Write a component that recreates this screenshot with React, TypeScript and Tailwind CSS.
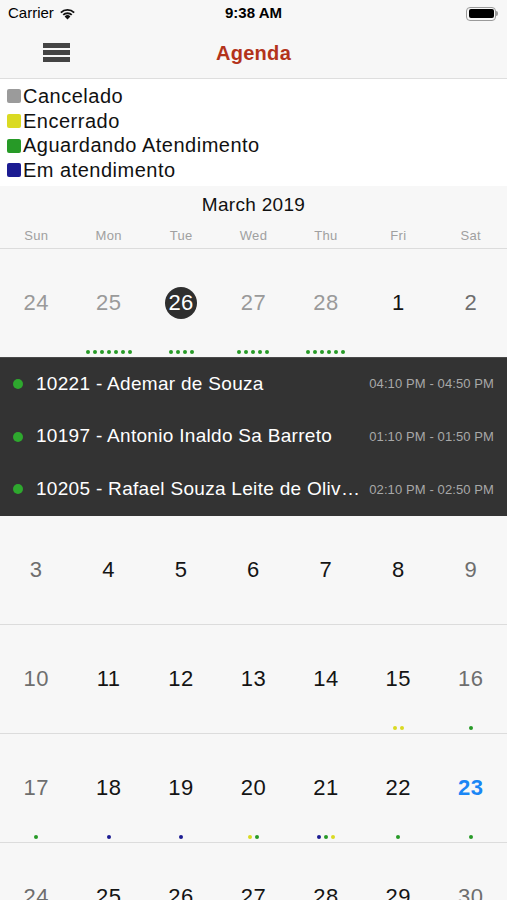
import React from "react";

type Day = { n: number; tone: "out" | "wk" | "we" | "sel" | "today"; dots?: string[] };

const G = "bg-[#279a27]";
const Y = "bg-[#dada22]";
const B = "bg-[#1c1c92]";

const rep = (c: string, k: number) => Array.from({ length: k }, () => c);

const weeks: Day[][] = [
  [
    { n: 24, tone: "out" },
    { n: 25, tone: "out", dots: rep(G, 7) },
    { n: 26, tone: "sel", dots: rep(G, 4) },
    { n: 27, tone: "out", dots: rep(G, 5) },
    { n: 28, tone: "out", dots: rep(G, 6) },
    { n: 1, tone: "wk" },
    { n: 2, tone: "we" },
  ],
  [
    { n: 3, tone: "we" },
    { n: 4, tone: "wk" },
    { n: 5, tone: "wk" },
    { n: 6, tone: "wk" },
    { n: 7, tone: "wk" },
    { n: 8, tone: "wk" },
    { n: 9, tone: "we" },
  ],
  [
    { n: 10, tone: "we" },
    { n: 11, tone: "wk" },
    { n: 12, tone: "wk" },
    { n: 13, tone: "wk" },
    { n: 14, tone: "wk" },
    { n: 15, tone: "wk", dots: [Y, Y] },
    { n: 16, tone: "we", dots: [G] },
  ],
  [
    { n: 17, tone: "we", dots: [G] },
    { n: 18, tone: "wk", dots: [B] },
    { n: 19, tone: "wk", dots: [B] },
    { n: 20, tone: "wk", dots: [Y, G] },
    { n: 21, tone: "wk", dots: [B, G, Y] },
    { n: 22, tone: "wk", dots: [G] },
    { n: 23, tone: "today", dots: [G] },
  ],
  [
    { n: 24, tone: "we" },
    { n: 25, tone: "wk" },
    { n: 26, tone: "wk" },
    { n: 27, tone: "wk" },
    { n: 28, tone: "wk" },
    { n: 29, tone: "wk" },
    { n: 30, tone: "we" },
  ],
];

const events = [
  { t: "10221 - Ademar de Souza", h: "04:10 PM - 04:50 PM" },
  { t: "10197 - Antonio Inaldo Sa Barreto", h: "01:10 PM - 01:50 PM" },
  { t: "10205 - Rafael Souza Leite de Oliveira", h: "02:10 PM - 02:50 PM" },
];

function Cell({ d }: { d: Day }) {
  const color =
    d.tone === "out"
      ? "text-[#9a9a9a]"
      : d.tone === "we"
      ? "text-[#6e6e6e]"
      : d.tone === "today"
      ? "text-[#1a86f5] font-bold"
      : "text-[#141414]";
  return (
    <div className="flex flex-col items-center">
      <div className="h-[38px]" />
      <div className="h-[32px] flex items-center justify-center">
        {d.tone === "sel" ? (
          <div className="w-[32px] h-[32px] rounded-full bg-[#2f2f2f] text-white flex items-center justify-center text-[22px] leading-none tracking-[0.3px]">
            {d.n}
          </div>
        ) : (
          <div className={`text-[22px] leading-[32px] tracking-[0.5px] ${color}`}>{d.n}</div>
        )}
      </div>
      <div className="h-[31px]" />
      <div className="h-[4px] flex gap-[3px]">
        {(d.dots || []).map((c, i) => (
          <div key={i} className={`w-[4px] h-[4px] rounded-full ${c}`} />
        ))}
      </div>
    </div>
  );
}

function Week({ w, first }: { w: Day[]; first: boolean }) {
  return (
    <div className={`grid grid-cols-7 ${first ? "h-[108px]" : "h-[109px] border-b border-[#dcdcdc]"}`}>
      {w.map((d, i) => (
        <Cell key={i} d={d} />
      ))}
    </div>
  );
}

export default function App() {
  return (
    <div className="w-[507px] h-[900px] overflow-hidden bg-[#f7f7f7] font-['Liberation_Sans',Arial,sans-serif]">
      {/* status bar */}
      <div className="h-[27px] flex items-center justify-between px-[8px] relative text-[15px] text-black">
        <div className="flex items-center gap-[5px]">
          <span>Carrier</span>
          <svg width="17" height="12" viewBox="0 0 17 12">
            <path d="M8.5 11.5 L5.6 8.4 A4.2 4.2 0 0 1 11.4 8.4 Z" fill="#111" />
            <path d="M3.6 6.3 A7 7 0 0 1 13.4 6.3 L12.1 7.6 A5.2 5.2 0 0 0 4.9 7.6 Z" fill="#111" />
            <path d="M1.2 3.9 A10.4 10.4 0 0 1 15.8 3.9 L14.5 5.2 A8.6 8.6 0 0 0 2.5 5.2 Z" fill="#111" />
          </svg>
        </div>
        <div className="absolute left-0 right-0 text-center font-bold text-[15px] pointer-events-none">9:38 AM</div>
        <div className="flex items-center mr-[1px]">
          <div className="w-[30px] h-[14px] rounded-[4px] border border-[#9a9a9a] p-[1.5px]">
            <div className="w-full h-full rounded-[2px] bg-black" />
          </div>
          <div className="w-[2px] h-[5px] bg-[#9a9a9a] rounded-r-sm" />
        </div>
      </div>
      {/* nav bar */}
      <div className="h-[52px] relative flex items-center border-b border-[#dedede]">
        <div className="ml-[43px] w-[27px] flex flex-col gap-[2px]">
          <div className="h-[5px] bg-[#444]" />
          <div className="h-[5px] bg-[#444]" />
          <div className="h-[5px] bg-[#444]" />
        </div>
        <div className="absolute left-0 right-0 text-center text-[20px] font-bold text-[#b3331b] tracking-[0.3px]">Agenda</div>
      </div>
      {/* legend */}
      <div className="bg-white pt-[5px] pb-[3px] text-[20px] leading-[24.67px] text-[#111] tracking-[0.5px]">
        {[
          ["bg-[#9b9b9b]", "Cancelado"],
          ["bg-[#dada22]", "Encerrado"],
          ["bg-[#279a27]", "Aguardando Atendimento"],
          ["bg-[#1c1c92]", "Em atendimento"],
        ].map(([c, t]) => (
          <div key={t} className="flex items-center pl-[7px]">
            <div className={`w-[14px] h-[14px] rounded-[2px] ${c}`} />
            <span className="ml-[2px]">{t}</span>
          </div>
        ))}
      </div>
      {/* calendar */}
      <div className="text-center text-[19px] text-[#111] leading-[22px] pt-[8px] tracking-[0.3px]">March 2019</div>
      <div className="grid grid-cols-7 text-[13px] text-[#a0a0a0] text-center h-[33px] pt-[10px] border-b border-[#dcdcdc] tracking-[0.3px]">
        {["Sun", "Mon", "Tue", "Wed", "Thu", "Fri", "Sat"].map((d) => (
          <div key={d}>{d}</div>
        ))}
      </div>
      <Week w={weeks[0]} first={true} />
      <div className="bg-[#333333] border-t border-[#4a4a4a]">
        {events.map((e, i) => (
          <div key={i} className="h-[52.7px] flex items-center pl-[13px] pr-[13px]">
            <div className="w-[10px] h-[10px] rounded-full bg-[#2ea82e] shrink-0" />
            <div className="ml-[13px] text-[19px] text-white truncate flex-1 min-w-0 tracking-[0.3px]">{e.t}</div>
            <div className="ml-[3px] text-[13px] text-[#a8a8a8] shrink-0 tracking-[0.1px]">{e.h}</div>
          </div>
        ))}
      </div>
      <Week w={weeks[1]} first={false} />
      <Week w={weeks[2]} first={false} />
      <Week w={weeks[3]} first={false} />
      <Week w={weeks[4]} first={false} />
    </div>
  );
}
